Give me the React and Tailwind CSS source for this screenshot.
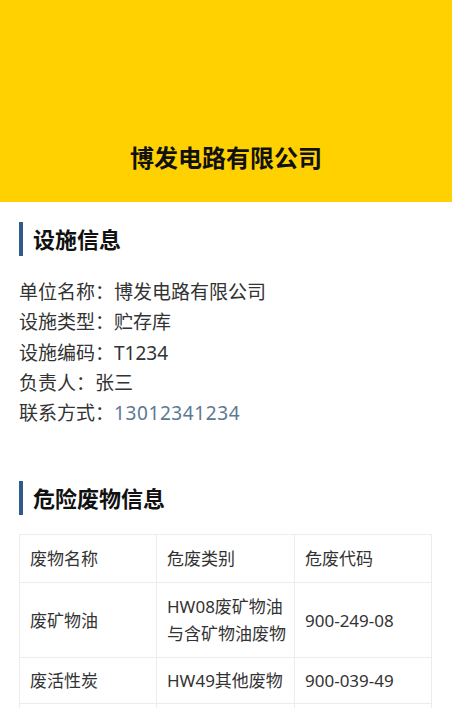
import React from "react";

const font = { fontFamily: '"Noto Sans", "Noto Sans CJK SC", sans-serif' };

function SectionTitle({ children }) {
  return (
    <div className="flex items-center">
      <div className="w-[4px] h-[34px] bg-[#2e5b8a]" />
      <div className="ml-[10px] text-[22px] font-bold leading-[34px] text-[#111]">{children}</div>
    </div>
  );
}

const rows = [
  ["废物名称", "危废类别", "危废代码"],
  ["废矿物油", ["HW08废矿物油", "与含矿物油废物"], "900-249-08"],
  ["废活性炭", "HW49其他废物", "900-039-49"],
  ["废包装桶", "HW49其他废物", "900-041-49"],
];

export default function App() {
  return (
    <div className="w-[452px] h-[708px] overflow-hidden bg-white" style={font}>
      <div className="h-[202px] bg-[#ffd100] flex items-end justify-center pb-[29px]">
        <div className="text-[24px] font-bold leading-[30px] text-[#111]">博发电路有限公司</div>
      </div>
      <div className="px-[19px] pt-[20px]">
        <SectionTitle>设施信息</SectionTitle>
        <div className="mt-[21px] text-[19px] leading-[30.3px] text-[#333]">
          <div>单位名称：博发电路有限公司</div>
          <div>设施类型：贮存库</div>
          <div>设施编码：T1234</div>
          <div>负责人：张三</div>
          <div>
            联系方式：<span className="text-[#5d7891] tracking-[0.6px]">13012341234</span>
          </div>
        </div>
        <div className="mt-[53px]">
          <SectionTitle>危险废物信息</SectionTitle>
        </div>
        <div className="mt-[19px] w-[413px] border border-[#ececec]">
          {rows.map((r, i) => (
            <div key={i} className={`grid grid-cols-[136px_138px_1fr] ${i > 0 ? "border-t border-[#ececec]" : ""}`}>
              {r.map((c, j) => (
                <div
                  key={j}
                  className={`flex flex-col justify-center px-[10px] ${i < 2 ? "py-[10px]" : "py-[9px]"} text-[17px] leading-[27px] text-[#333] whitespace-nowrap ${j > 0 ? "border-l border-[#ececec]" : ""}`}
                >
                  {Array.isArray(c) ? c.map((l, k) => <div key={k}>{l}</div>) : c}
                </div>
              ))}
            </div>
          ))}
        </div>
      </div>
    </div>
  );
}
